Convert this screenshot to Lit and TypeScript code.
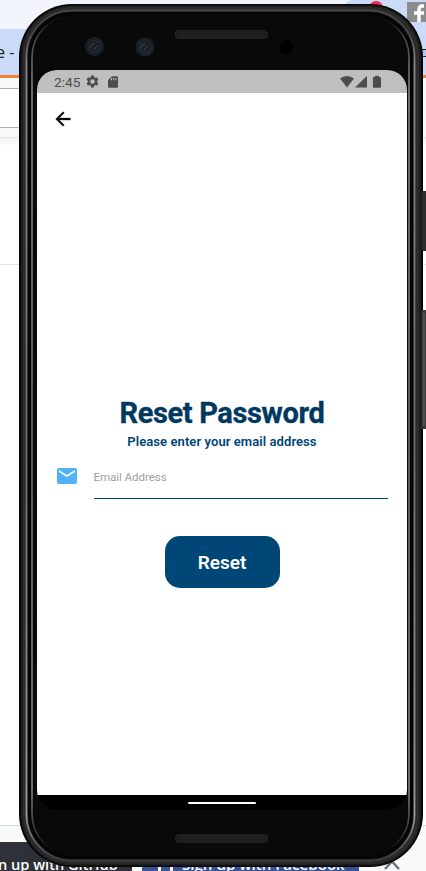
import { LitElement, html, css, svg } from "lit";
import { customElement } from "lit/decorators.js";

@customElement("browser-backdrop")
class BrowserBackdrop extends LitElement {
  static styles = css`
    :host { display: flex; flex-direction: column; width: 426px; height: 871px; background: #fff; font-family: "Noto Sans", sans-serif; overflow: hidden; }
    .strip { height: 29px; background: #f2f6fc; display: flex; justify-content: flex-end; }
    .tabs { width: 82px; background: #cbdbf7; border-top-left-radius: 8px; display: flex; }
    .badge { width: 14px; height: 14px; margin: 1px 0 0 25px; border-radius: 50%; background: #f8234f; }
    .fb { width: 19px; height: 20px; margin: 2px 0 0 24px; background: #8c8c8c; }
    .bar { height: 46px; box-sizing: border-box; background: #cbdbf7; display: flex; justify-content: space-between; font: 16px/46px "Open Sans", sans-serif; color: #202020; }
    .bar span { white-space: pre; margin-left: -4px; }
    .mark { width: 4px; height: 6px; margin-top: 20px; border: 1px solid #222; border-right: 0; background: #a8ccff; }
    .orange { height: 3px; background: #fb802b; }
    .nav { height: 60px; background: #f7faf9; box-sizing: border-box; padding-top: 10px; border-bottom: 1px solid #e2e4e6; }
    .search { height: 38px; border: solid #aeb2b5; border-width: 1px 0; width: 22px; background: #fff; }
    .rule { height: 127px; box-sizing: border-box; border-bottom: 1px solid #dfe3e6; background: linear-gradient(#f3f3f3, #fff 8px); }
    .space { flex: 1; }
    .foot { height: 46px; box-sizing: border-box; border-top: 1px solid #d9dddf; background: #f7faf9; display: flex; align-items: flex-end; }
    .btn { height: 29px; overflow: hidden; white-space: nowrap; color: #fff; font: 600 14.6px/45px "Open Sans", sans-serif; }
    .git { width: 132px; background: #2e3238; display: flex; }
    .git span { margin-left: -2px; }
    .face { width: 217px; margin-left: 10px; background: #37549a; display: flex; font-size: 15.1px; }
    .logo { width: 9px; height: 29px; margin: 0 9px 0 16px; border: solid #fff; border-width: 0 3px 0 3px; }
    .chev { margin: 0 0 0 22px; }
  `;
  render() {
    return html`
      <div class="strip"><div class="tabs"><i class="badge"></i>
        <svg class="fb" viewBox="0 0 19 20"><path d="M17 4h-2q-3 0-3 4v12M7 11h10" fill="none" stroke="#fff" stroke-width="3.4"/></svg>
      </div></div>
      <div class="bar"><span>e -</span><i class="mark"></i></div>
      <div class="orange"></div>
      <div class="nav"><div class="search"></div></div>
      <div class="rule"></div>
      <div class="space"></div>
      <div class="foot">
        <div class="btn git"><span>n up with GitHub</span></div>
        <div class="btn face"><i class="logo"></i><span>Sign up with Facebook</span></div>
        <svg class="chev" width="22" height="20"><path d="M4 18L11 10.5L18 18" fill="none" stroke="#687078" stroke-width="2.4"/></svg>
      </div>`;
  }
}

@customElement("phone-shell")
class PhoneShell extends LitElement {
  static styles = css`
    :host { display: block; width: 407px; height: 863px; }
    svg { display: block; }
  `;
  render() {
    const lens = (x: number, y: number) => svg`
      <circle cx=${x} cy=${y} r="9.6" fill="#172028"/>
      <circle cx=${x} cy=${y} r="6.6" fill="#25292d"/>
      <circle cx=${x} cy=${y} r="5" fill="#1b1d21"/>
      <path d="M${x - 4} ${y + 1}q1-4 4-4M${x - 1} ${y + 3}l4-4" stroke="#454c54" fill="none"/>`;
    return html`<svg width="407" height="863" viewBox="0 0 407 863">
      <defs>
        <linearGradient id="rim" gradientUnits="userSpaceOnUse" x1="0" y1="0" x2="0" y2="863">
          <stop offset="0" stop-color="#454545"/><stop offset=".035" stop-color="#484848"/><stop offset=".07" stop-color="#858585"/>
          <stop offset=".5" stop-color="#68686a"/><stop offset=".94" stop-color="#999"/><stop offset=".975" stop-color="#555"/><stop offset="1" stop-color="#333"/>
        </linearGradient>
        <linearGradient id="glass" gradientUnits="userSpaceOnUse" x1="0" y1="0" x2="0" y2="863">
          <stop offset=".015" stop-color="#090909"/><stop offset=".04" stop-color="#45454c"/><stop offset=".1" stop-color="#858488"/>
          <stop offset=".5" stop-color="#6c6d70"/><stop offset=".91" stop-color="#858488"/><stop offset=".96" stop-color="#33333a"/><stop offset=".98" stop-color="#090909"/>
        </linearGradient>
        <pattern id="mesh" width="2" height="2" patternUnits="userSpaceOnUse">
          <rect width="2" height="2" fill="#1b1b1b"/><rect width="1" height="1" fill="#292929"/>
        </pattern>
      </defs>
      <rect width="404" height="863" rx="53" fill="#060606"/>
      <rect x="402.500" y="187" width="6" height="60" rx="1" fill="#2c2c2c"/>
      <rect x="402.500" y="306" width="6" height="119" rx="1" fill="#3b3b3b"/>
      <path d="M405 309V422" stroke="#666"/>
      <rect x="2" y="1.500" width="400" height="860" rx="51" fill="#1f1f1f"/>
      <rect x="4" y="3" width="396" height="857" rx="49" fill="#2b2b2b"/>
      <rect x="7.500" y="6.500" width="388" height="850" rx="46" fill="#161616" stroke="url(#rim)" stroke-width="1.800"/>
      <rect x="9" y="8" width="385" height="847" rx="44" fill="#050505"/>
      <rect x="13" y="12" width="377" height="839" rx="41" fill="#090909" stroke="url(#glass)" stroke-width="1.600"/>
      <rect x="14.500" y="13" width="374" height="837" rx="40" fill="#090909"/>
      ${lens(75.5, 42.5)}${lens(126, 43)}
      <circle cx="267.300" cy="43" r="7" fill="#010102"/>
      <rect x="156" y="26" width="93" height="9" rx="4" fill="url(#mesh)"/>
      <rect x="156" y="830" width="93" height="9" rx="4" fill="url(#mesh)"/>
    </svg>`;
  }
}

@customElement("app-root")
class AppRoot extends LitElement {
  static styles = css`
    :host { display: block; position: relative; width: 426px; height: 871px; overflow: hidden; font-family: Roboto, sans-serif; }
    phone-shell { position: absolute; left: 19px; top: 4px; }
    .screen { position: absolute; left: 37px; top: 70px; width: 370px; height: 740px; border-radius: 20px; overflow: hidden; background: linear-gradient(#bfbfbf 23px, #fff 23px, #fff 725px, #000 725px); display: flex; flex-direction: column; }
    .status { height: 23px; display: flex; align-items: center; color: #4d4d4d; fill: #4d4d4d; font-size: 13.7px; line-height: 23px; box-sizing: border-box; padding: 0 25px 0 17px; }
    .time { width: 31px; padding-top: 1px; }
    .gap { flex: 1; }
    .status svg { display: block; }
    .head { padding: 15px 0 0 15px; height: 303px; box-sizing: border-box; }
    .head svg { display: block; }
    h1 { margin: 0; text-align: center; font-size: 29px; line-height: 34px; font-weight: 700; color: #00385f; height: 34px; white-space: nowrap; letter-spacing: -.36px; -webkit-text-stroke: .35px #00385f; }
    .title, .sub, .hint, .label { display: inline-block; white-space: nowrap; }
    p { margin: 3px 0 0; height: 17px; text-align: center; font-size: 13px; line-height: 17px; font-weight: 600; color: #004576; letter-spacing: .08px; }
    .field { display: flex; margin: 13px 19px 0 18px; height: 36px; }
    .field svg { display: block; width: 24px; margin: 1px 14px 0 0; }
    .input { flex: 1; margin-left: .5px; border-bottom: 1px solid #004576; color: #9f9f9f; font-size: 11.6px; line-height: 28px; letter-spacing: -.08px; height: 36px; box-sizing: border-box; }
    .reset { margin: 37px 0 0 127.5px; width: 115px; height: 52px; border-radius: 15px; background: #004778; color: #fff; font: 600 19px/54px Roboto, sans-serif; text-align: center; border: 0; padding: 0; }
    .home { margin-top: auto; height: 15px; display: flex; justify-content: center; }
    .home i { width: 68px; height: 2px; margin-top: 7px; background: #fff; border-radius: 1px; }
  `;
  render() {
    return html`
      <browser-backdrop></browser-backdrop>
      <phone-shell></phone-shell>
      <main class="screen">
        <div class="status">
          <span class="time">2:45</span>
          <svg width="15" height="15" viewBox="0 0 24 24"><path d="M19.14 12.94c.04-.3.06-.61.06-.94s-.02-.64-.07-.94l2.03-1.58a.49.49 0 0 0 .12-.61l-1.92-3.32a.49.49 0 0 0-.59-.22l-2.39.96c-.5-.38-1.03-.7-1.62-.94l-.36-2.54A.48.48 0 0 0 13.92 2.4h-3.84a.48.48 0 0 0-.47.41l-.36 2.54c-.59.24-1.13.57-1.62.94l-2.39-.96a.48.48 0 0 0-.59.22L2.74 8.87a.48.48 0 0 0 .12.61l2.03 1.58c-.05.3-.09.63-.09.94s.02.64.07.94l-2.03 1.58a.49.49 0 0 0-.12.61l1.92 3.32c.12.22.37.29.59.22l2.39-.96c.5.38 1.03.7 1.62.94l.36 2.54c.05.24.24.41.48.41h3.84c.24 0 .44-.17.47-.41l.36-2.54c.59-.24 1.13-.56 1.62-.94l2.39.96c.22.08.47 0 .59-.22l1.92-3.32a.48.48 0 0 0-.12-.61zM12 15.6a3.6 3.6 0 1 1 0-7.2 3.6 3.6 0 0 1 0 7.2z"/></svg>
          <svg width="22" height="14" viewBox="0 0 22 14"><path d="M12 1.200h5q1 0 1 1v9.600q0 1-1 1H9q-1 0-1-1V5.200zM11 3v2.200h1V3zm2.200 0v2.200h1V3zm2.200 0v2.200h1V3z" fill-rule="evenodd"/></svg>
          <span class="gap"></span>
          <svg width="42" height="14" viewBox="0 0 42 14"><path d="M0 3.500Q7-1.600 14 3.500L7 12.500z"/><path d="M27 .8V12.500H15z"/><path d="M33.500 12.800q-.6 0-.6-.7V2.700q0-.8.800-.8H35V.8h4v1.100h1.200q.8 0 .8.800v9.400q0 .7-.7.700z"/></svg>
        </div>
        <div class="head"><svg width="22" height="22" viewBox="0 0 24 24"><path d="M20 11H7.830l5.590-5.590L12 4l-8 8 8 8 1.410-1.410L7.830 13H20z" stroke="#000" stroke-width=".4"/></svg></div>
        <h1><span class="title">Reset Password</span></h1>
        <p><span class="sub">Please enter your email address</span></p>
        <div class="field">
          <svg height="24" viewBox="0 0 24 24"><path d="M20 4H4c-1.100 0-1.990.9-1.990 2L2 18c0 1.100.9 2 2 2h16c1.100 0 2-.9 2-2V6c0-1.100-.9-2-2-2zm0 4l-8 5-8-5V6l8 5 8-5z" fill="#4fb2f7"/></svg>
          <div class="input"><span class="hint">Email Address</span></div>
        </div>
        <button class="reset"><span class="label">Reset</span></button>
        <div class="home"><i></i></div>
      </main>`;
  }
}
